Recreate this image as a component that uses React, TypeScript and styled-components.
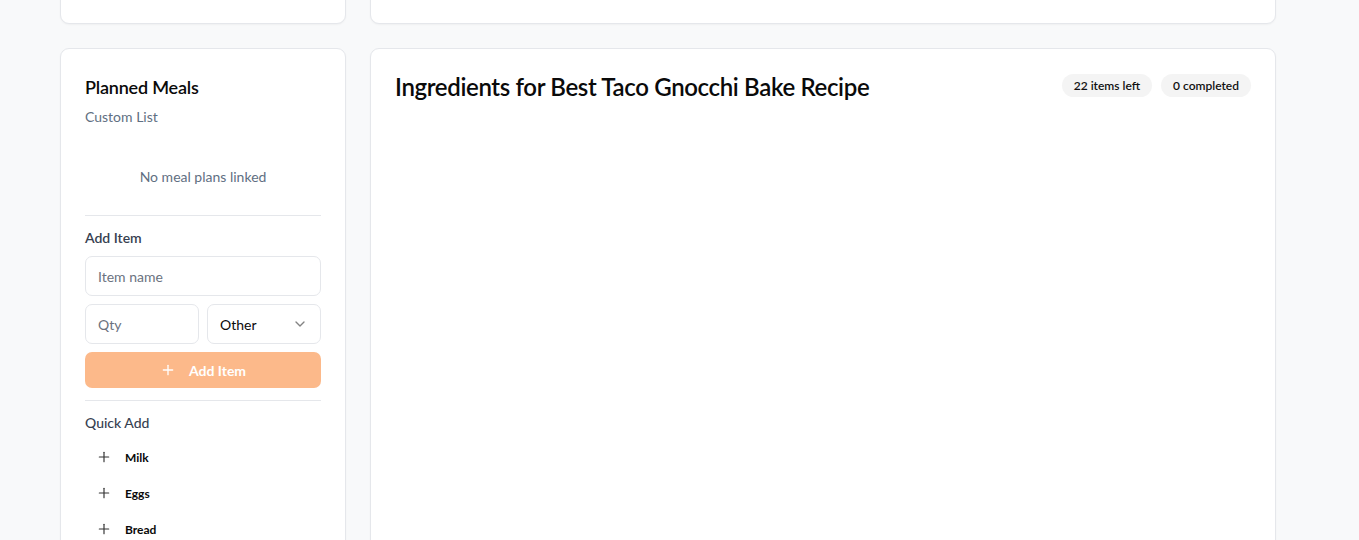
import React from "react";
import styled, { createGlobalStyle } from "styled-components";
import { Plus, ChevronDown } from "lucide-react";

const GlobalStyle = createGlobalStyle`
  * { box-sizing: border-box; }
  html, body { margin: 0; padding: 0; }
  body {
    background: #f8f9fa;
    font-family: "Segoe UI", Lato, "Noto Sans", sans-serif;
    color: #0a0a0a;
    overflow: hidden;
  }
`;

const Page = styled.div`
  padding-left: 60px;
  margin-top: -100px;
  display: flex;
  flex-direction: column;
  gap: 24px;
`;

const Row = styled.div`
  display: grid;
  grid-template-columns: 286px 906px;
  gap: 24px;
`;

const Card = styled.div<{ $h: number }>`
  background: #ffffff;
  border: 1px solid #e5e7eb;
  border-radius: 9px;
  box-shadow: 0 1px 2px rgba(0, 0, 0, 0.04);
  height: ${(p) => p.$h}px;
  padding: 24px;
  display: flex;
  flex-direction: column;
`;

const CardTitle = styled.h2`
  margin: 0;
  font-size: 18px;
  line-height: 28px;
  font-weight: 600;
  letter-spacing: -0.2px;
  color: #0a0a0a;
`;

const SubText = styled.div`
  margin-top: 6px;
  font-size: 14px;
  line-height: 20px;
  color: #5f6f82;
`;

const EmptyState = styled.div`
  padding: 40px 0 28px;
  text-align: center;
  font-size: 14px;
  line-height: 20px;
  color: #5f6f82;
`;

const Divider = styled.hr`
  margin: 0;
  border: none;
  border-top: 1px solid #e5e7eb;
`;

const Section = styled.div`
  padding: 12px 0;
  display: flex;
  flex-direction: column;
`;

const SectionLabel = styled.div<{ $weight?: number; $gap?: number }>`
  font-size: 14px;
  line-height: 20px;
  font-weight: ${(p) => p.$weight ?? 600};
  color: #374151;
  margin-bottom: ${(p) => p.$gap ?? 8}px;
`;

const Fields = styled.div`
  display: flex;
  flex-direction: column;
  gap: 8px;
`;

const FieldRow = styled.div`
  display: grid;
  grid-template-columns: 1fr 1fr;
  gap: 8px;
`;

const Input = styled.input`
  height: 40px;
  width: 100%;
  border: 1px solid #e5e7eb;
  border-radius: 7px;
  padding: 0 12px;
  font-family: inherit;
  font-size: 14px;
  color: #0a0a0a;
  background: #fff;
  outline: none;
  &::placeholder { color: #6b7280; }
`;

const SelectBox = styled.div`
  height: 40px;
  border: 1px solid #e5e7eb;
  border-radius: 7px;
  padding: 0 12px;
  display: flex;
  align-items: center;
  justify-content: space-between;
  font-size: 14px;
  color: #0a0a0a;
  background: #fff;
  svg { color: #0a0a0a; opacity: 0.5; }
`;

const PrimaryButton = styled.button`
  height: 36px;
  width: 100%;
  border: none;
  border-radius: 7px;
  background: #fcb98a;
  color: #ffffff;
  font-family: inherit;
  font-size: 14px;
  font-weight: 700;
  display: flex;
  align-items: center;
  justify-content: center;
  gap: 13px;
`;

const QuickList = styled.div`
  display: flex;
  flex-direction: column;
`;

const QuickItem = styled.button`
  height: 36px;
  border: none;
  background: transparent;
  padding: 0 11px;
  display: flex;
  align-items: center;
  gap: 13px;
  font-family: inherit;
  font-size: 12px;
  font-weight: 700;
  color: #0a0a0a;
  svg { color: #333; }
`;

const Header = styled.div`
  display: flex;
  align-items: flex-start;
  justify-content: space-between;
`;

const BigTitle = styled.h1`
  margin: 0;
  font-size: 24px;
  line-height: 28px;
  font-weight: 600;
  letter-spacing: -0.35px;
  color: #0a0a0a;
`;

const Badges = styled.div`
  display: flex;
  gap: 9px;
  margin-top: 1px;
`;

const Badge = styled.span`
  background: #f4f4f4;
  border-radius: 999px;
  padding: 3px 12px;
  font-size: 12px;
  line-height: 17px;
  font-weight: 600;
  color: #111;
`;

export default function App() {
  return (
    <>
      <GlobalStyle />
      <Page>
        <Row>
          <Card $h={124} />
          <Card $h={124} />
        </Row>
        <Row>
          <Card $h={600}>
            <CardTitle>Planned Meals</CardTitle>
            <SubText>Custom List</SubText>
            <EmptyState>No meal plans linked</EmptyState>
            <Divider />
            <Section>
              <SectionLabel>Add Item</SectionLabel>
              <Fields>
                <Input placeholder="Item name" />
                <FieldRow>
                  <Input placeholder="Qty" />
                  <SelectBox>
                    <span>Other</span>
                    <ChevronDown size={16} strokeWidth={2} />
                  </SelectBox>
                </FieldRow>
                <PrimaryButton>
                  <Plus size={16} strokeWidth={2} />
                  Add Item
                </PrimaryButton>
              </Fields>
            </Section>
            <Divider />
            <Section>
              <SectionLabel $weight={500} $gap={6}>Quick Add</SectionLabel>
              <QuickList>
                {["Milk", "Eggs", "Bread", "Butter"].map((n) => (
                  <QuickItem key={n}>
                    <Plus size={16} strokeWidth={1.75} />
                    {n}
                  </QuickItem>
                ))}
              </QuickList>
            </Section>
          </Card>
          <Card $h={600}>
            <Header>
              <BigTitle>Ingredients for Best Taco Gnocchi Bake Recipe</BigTitle>
              <Badges>
                <Badge>22 items left</Badge>
                <Badge>0 completed</Badge>
              </Badges>
            </Header>
          </Card>
        </Row>
      </Page>
    </>
  );
}
